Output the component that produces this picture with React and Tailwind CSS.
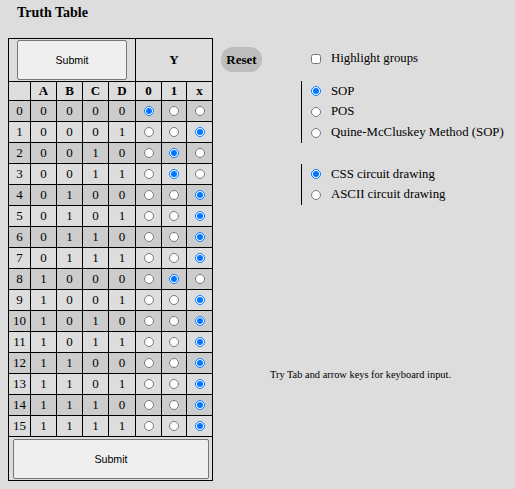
import React from "react";

const rows = [
  "0", "x", "1", "1", "x", "x", "x", "x",
  "1", "x", "x", "x", "x", "x", "x", "x",
];

function Cell({ children, className = "" }) {
  return (
    <div
      className={`border-r border-b border-black flex items-center justify-center ${className}`}
    >
      {children}
    </div>
  );
}

function Radio({ name, checked }) {
  return (
    <input
      type="radio"
      name={name}
      defaultChecked={checked}
      className="w-[10px] h-[10px] m-0"
    />
  );
}

export default function App() {
  return (
    <div className="min-h-screen w-full bg-[#dddddd] text-black font-['Liberation_Serif',serif] flex items-start">
      <div className="pl-[8px] pt-[5px] shrink-0">
        <div className="pl-[9px] text-[14px] leading-[16px] font-bold">
          Truth Table
        </div>
        <div className="mt-[17px] w-[205px] grid grid-cols-[22px_26px_26px_26px_27px_26px_25px_26px] border-l border-t border-black text-[13px]">
          <Cell className="col-span-5 h-[43px]">
            <button className="w-[110px] h-[40px] bg-[#efefef] border border-[#767676] rounded-[2px] font-['Liberation_Sans',sans-serif] text-[10.67px]">
              Submit
            </button>
          </Cell>
          <Cell className="col-span-3 h-[43px] font-bold">Y</Cell>

          {["", "A", "B", "C", "D", "0", "1", "x"].map((h, i) => (
            <Cell key={i} className="h-[19px] font-bold">
              {h}
            </Cell>
          ))}

          {rows.map((y, r) => {
            const bits = [8, 4, 2, 1].map((b) => ((r & b) ? "1" : "0"));
            const bg = r % 2 === 0 ? "bg-[#cccccc]" : "";
            return (
              <React.Fragment key={r}>
                <Cell className={`h-[21px] ${bg}`}>{r}</Cell>
                {bits.map((b, i) => (
                  <Cell key={i} className={`h-[21px] ${bg}`}>
                    {b}
                  </Cell>
                ))}
                {["0", "1", "x"].map((v) => (
                  <Cell key={v} className={`h-[21px] ${bg}`}>
                    <Radio name={`row${r}`} checked={y === v} />
                  </Cell>
                ))}
              </React.Fragment>
            );
          })}

          <div className="col-span-8 h-[44px] border-r border-b border-black pl-[4px] pt-[2px]">
            <button className="w-[196px] h-[40px] bg-[#efefef] border border-[#767676] rounded-[2px] font-['Liberation_Sans',sans-serif] text-[10.67px]">
              Submit
            </button>
          </div>
        </div>
      </div>

      <div className="flex-1 flex flex-col">
        <div className="flex items-start">
          <button className="ml-[8px] mt-[47px] w-[41px] h-[25px] rounded-[12px] bg-[#bdbdbd] font-bold text-[13px]">
            Reset
          </button>
          <div className="ml-[39px] mt-[49px] text-[12.8px]">
            <label className="h-[20px] pl-[10px] flex items-center gap-[10px]">
              <input type="checkbox" className="w-[10px] h-[10px] m-0" />
              Highlight groups
            </label>
            <div className="mt-[12px] border-l border-black pl-[9px]">
              {["SOP", "POS", "Quine-McCluskey Method (SOP)"].map((t, i) => (
                <label key={t} className="h-[20.67px] flex items-center gap-[10px]">
                  <Radio name="method" checked={i === 0} />
                  {t}
                </label>
              ))}
            </div>
            <div className="mt-[21px] border-l border-black pl-[9px]">
              {["CSS circuit drawing", "ASCII circuit drawing"].map((t, i) => (
                <label key={t} className="h-[20.5px] flex items-center gap-[10px]">
                  <Radio name="drawing" checked={i === 0} />
                  {t}
                </label>
              ))}
            </div>
          </div>
        </div>
        <p className="mt-[164px] pr-[7px] text-center text-[10.4px] leading-[12px]">
          Try Tab and arrow keys for keyboard input.
        </p>
      </div>
    </div>
  );
}
